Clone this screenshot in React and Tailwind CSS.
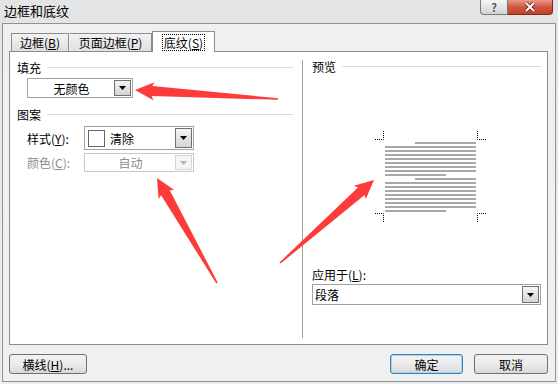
import React from "react";

const arrows = [
  { tip: [135, 90], tail: [278, 99] },
  { tip: [157, 178], tail: [217, 283] },
  { tip: [374, 180], tail: [280, 263] },
];

function arrowPoints([tx, ty], [ex, ey], headLen = 17, headW = 9, w1 = 5, w0 = 0.8) {
  const dx = ex - tx;
  const dy = ey - ty;
  const len = Math.hypot(dx, dy);
  const ux = dx / len;
  const uy = dy / len;
  const nx = -uy;
  const ny = ux;
  const bx = tx + ux * headLen;
  const by = ty + uy * headLen;
  const pts = [
    [tx, ty],
    [bx + nx * headW + ux * 2, by + ny * headW + uy * 2],
    [bx + nx * w1, by + ny * w1],
    [ex + nx * w0, ey + ny * w0],
    [ex - nx * w0, ey - ny * w0],
    [bx - nx * w1, by - ny * w1],
    [bx - nx * headW + ux * 2, by - ny * headW + uy * 2],
  ];
  return pts.map((p) => p.join(",")).join(" ");
}

function Caret({ disabled }) {
  return (
    <div
      className={`flex items-center justify-center w-[17px] self-stretch border ${
        disabled
          ? "border-[#d5d5d5] bg-[#f4f4f4]"
          : "border-[#707070] bg-gradient-to-b from-[#f4f4f4] to-[#d4d4d4]"
      }`}
    >
      <svg width="7" height="4" viewBox="0 0 7 4">
        <polygon points="0,0 7,0 3.5,4" fill={disabled ? "#b4b4b4" : "#000"} />
      </svg>
    </div>
  );
}

function Select({ className, children, disabled, center }) {
  return (
    <div
      className={`flex items-stretch border ${
        disabled ? "border-[#c8c8c8]" : "border-[#a2a2a2]"
      } bg-white p-px ${className}`}
    >
      <div
        className={`flex-1 flex items-center ${center ? "justify-center" : ""} ${
          disabled ? "text-[#8c8c8c]" : "text-black"
        }`}
      >
        {children}
      </div>
      <Caret disabled={disabled} />
    </div>
  );
}

function Btn({ className, children, def }) {
  return (
    <div
      className={`h-[20px] flex items-center justify-center rounded-[3px] border ${
        def ? "border-[#3c7fb1] shadow-[inset_0_0_0_1px_#9fd6f5]" : "border-[#707070]"
      } bg-gradient-to-b from-[#f2f2f2] via-[#ebebeb] to-[#d8d8d8] ${className}`}
    >
      {children}
    </div>
  );
}

function Header({ label, className }) {
  return (
    <div className={`flex items-center h-[15px] ${className}`}>
      <span>{label}</span>
      <div className="flex-1 h-px bg-[#d5dfe5] ml-[6px]" />
    </div>
  );
}

const lines = [
  [30, 91], [0, 91], [0, 91], [0, 91], [0, 91], [0, 91], [0, 91], [0, 91], [0, 61],
  [30, 91], [0, 91], [0, 91], [0, 91], [0, 91], [0, 91], [0, 91], [0, 91], [0, 61],
];

function Preview() {
  // origin at page (370,120)
  const d = "#000";
  return (
    <svg width="120" height="100" viewBox="0 0 120 100" className="ml-[67px] mt-[52px]">
      <g stroke={d} strokeWidth="1" strokeDasharray="1 1" fill="none">
        <path d="M5 13.5H13.5V5" />
        <path d="M107.5 5V13.5H116" />
        <path d="M5 87.5H13.5V96" />
        <path d="M107.5 96V87.5H116" />
      </g>
      {lines.map(([x0, x1], i) => (
        <rect key={i} x={15 + x0} y={16 + i * 4} width={x1 - x0} height="2" fill="#a8a8a8" />
      ))}
    </svg>
  );
}

export default function App() {
  return (
    <div className="relative w-[558px] h-[384px] overflow-hidden bg-gradient-to-b from-[#e2e4e6] to-[#eceef0] text-[12px] leading-[15px] text-black font-['Noto_Sans_CJK_SC','Noto_Sans',sans-serif]">
      {/* Title bar */}
      <div className="flex h-[23px] items-start">
        <div className="pl-[4px] pt-[3px] text-[13px]">边框和底纹</div>
        <div className="ml-auto mr-[5px] flex">
          <div className="w-[28px] h-[15px] flex items-center justify-center rounded-bl-[4px] border border-t-0 border-[#7a7a7a] bg-gradient-to-b from-[#f6f6f6] to-[#d3d3d3] text-[11px] leading-none text-[#555] font-bold">
            ?
          </div>
          <div className="w-[45px] h-[15px] flex items-center justify-center rounded-br-[4px] border border-t-0 border-l-0 border-[#7b2a20] bg-gradient-to-b from-[#e89a8a] via-[#d0563f] to-[#c4402b]">
            <svg width="12" height="10" viewBox="0 0 12 10">
              <path d="M2 1L10 9M10 1L2 9" stroke="#5a1d14" strokeWidth="3.4" />
              <path d="M2 1L10 9M10 1L2 9" stroke="#fff" strokeWidth="2" />
            </svg>
          </div>
        </div>
      </div>

      {/* Window body */}
      <div className="mx-[2px] h-[359px] border border-[#8f9296] bg-[#f0f0f0] flex flex-col">
        <div className="ml-[6px] mt-[7px] w-[539px]">
          {/* Tabs */}
          <div className="flex items-end h-[21px] pl-[2px] relative z-10 -mb-px">
            <div className="mb-px w-[58px] h-[18px] flex items-center justify-center border border-b-0 border-[#898c95] bg-gradient-to-b from-[#f2f2f2] to-[#e0e0e0]">
              边框(<span className="underline">B</span>)
            </div>
            <div className="mb-px ml-px w-[82px] h-[18px] flex items-center justify-center border border-b-0 border-l-0 border-[#898c95] bg-gradient-to-b from-[#f2f2f2] to-[#e0e0e0]">
              页面边框(<span className="underline">P</span>)
            </div>
            <div className="w-[63px] h-[21px] flex items-center justify-center border border-b-0 border-[#898c95] bg-white">
              <span className="border border-dotted border-black px-px">
                底纹(<span className="underline">S</span>)
              </span>
            </div>
          </div>

          {/* Panel */}
          <div className="h-[294px] border border-[#898c95] bg-white flex">
            {/* Left */}
            <div className="w-[292px] flex flex-col">
              <Header label="填充" className="mt-[8px] pl-[7px] pr-[9px]" />
              <Select center className="mt-[3px] ml-[17px] w-[106px] h-[20px]">
                无颜色
              </Select>
              <Header label="图案" className="mt-[9px] pl-[7px] pr-[9px]" />
              <div className="flex items-center mt-[4px] pl-[17px]">
                <span className="w-[57px]">
                  样式(<span className="underline">Y</span>):
                </span>
                <Select className="w-[110px] h-[24px]">
                  <div className="ml-[2px] w-[17px] h-[17px] border border-[#666]" />
                  <span className="ml-[5px]">清除</span>
                </Select>
              </div>
              <div className="flex items-center mt-[3px] pl-[17px] text-[#8c8c8c]">
                <span className="w-[57px]">
                  颜色(<span className="underline">C</span>):
                </span>
                <Select disabled center className="w-[110px] h-[19px]">
                  自动
                </Select>
              </div>
            </div>

            {/* Divider */}
            <div className="w-px bg-[#a0a0a0] mt-[8px] h-[278px]" />

            {/* Right */}
            <div className="flex-1 flex flex-col">
              <Header label="预览" className="mt-[7px] pl-[9px] pr-[6px]" />
              <div className="h-[101px]">
                <Preview />
              </div>
              <div className="mt-[92px] pl-[9px]">
                应用于(<span className="underline">L</span>):
              </div>
              <Select className="mt-[2px] ml-[9px] w-[229px] h-[21px]">
                <span className="ml-[1px]">段落</span>
              </Select>
            </div>
          </div>
        </div>

        {/* Buttons */}
        <div className="flex mt-[9px] pl-[6px]">
          <Btn className="w-[78px]">
            横线(<span className="underline">H</span>)...
          </Btn>
          <Btn def className="ml-auto w-[73px]">
            确定
          </Btn>
          <Btn className="ml-[11px] mr-[7px] w-[74px]">取消</Btn>
        </div>
      </div>

      {/* Red annotation arrows */}
      <svg className="absolute inset-0 pointer-events-none" width="558" height="384">
        {arrows.map((a, i) => (
          <polygon key={i} points={arrowPoints(a.tip, a.tail)} fill="#fd3b3b" />
        ))}
      </svg>
    </div>
  );
}
